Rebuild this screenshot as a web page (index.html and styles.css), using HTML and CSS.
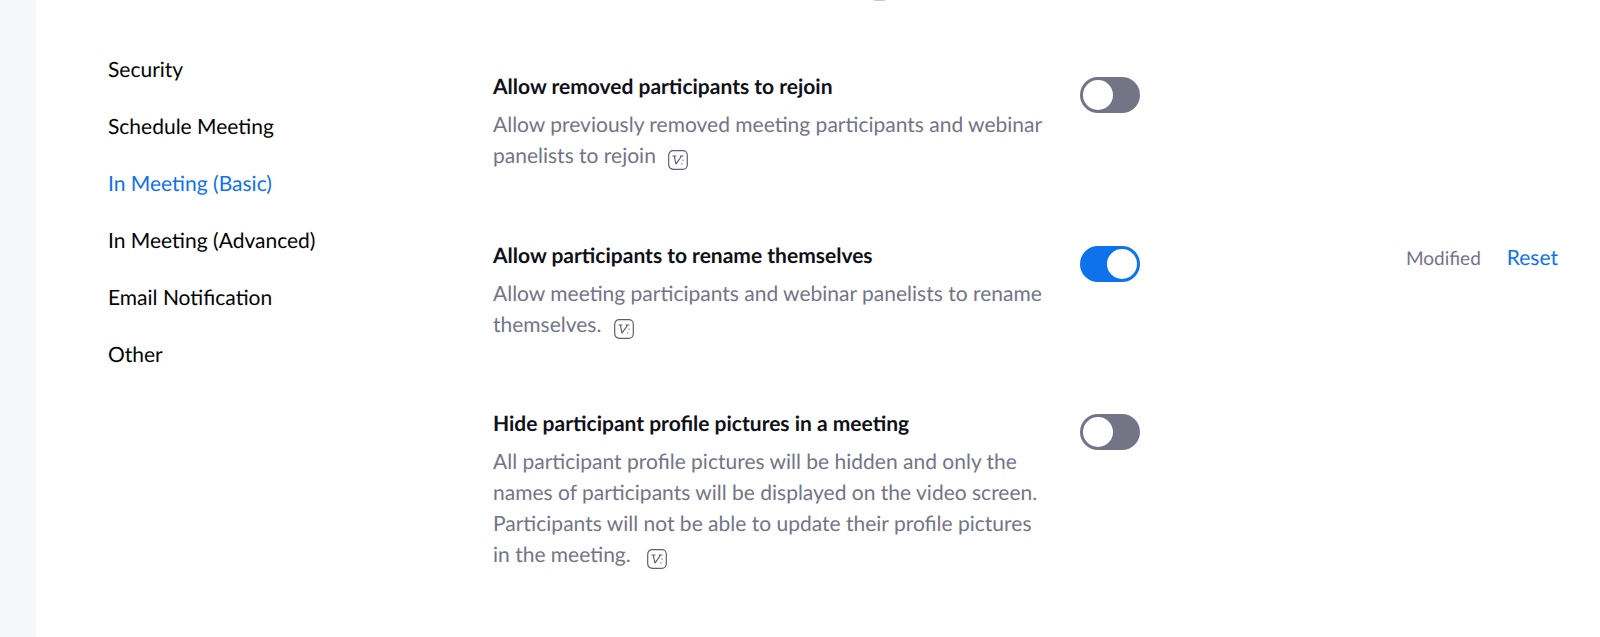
FILE: index.html
```html
<!DOCTYPE html>
<html>
  <head>
    <meta charset="utf-8" />
    <title>Meeting settings</title>
    <link rel="stylesheet" href="styles.css">
  </head>
  <body>
    <div class="gutter"></div>
    <div class="page">
      <span class="top-mark"></span>
      <ul class="side-nav">
        <li>Security</li>
        <li>Schedule Meeting</li>
        <li class="active">In Meeting (Basic)</li>
        <li>In Meeting (Advanced)</li>
        <li>Email Notification</li>
        <li>Other</li>
      </ul>
      <div class="settings">
        <div class="setting">
          <div class="setting-text">
            <h3>Allow removed participants to rejoin</h3>
            <p>
              Allow previously removed meeting participants and webinar
              panelists to rejoin
              <svg class="version-icon" viewBox="0 0 20 20"><rect x="0.7" y="0.7" width="18.6" height="18.6" rx="4.5" /><path d="M4.5 6h4M6.3 6l1.6 8.2M8 14.2L13.6 6M11.8 6h3.6M14.6 10.2h1M13.4 13.8h1" /></svg>
            </p>
          </div>
          <div class="toggle"></div>
          <div class="setting-state"></div>
        </div>
        <div class="setting">
          <div class="setting-text">
            <h3>Allow participants to rename themselves</h3>
            <p>
              Allow meeting participants and webinar panelists to rename
              themselves.
              <svg class="version-icon" viewBox="0 0 20 20"><rect x="0.7" y="0.7" width="18.6" height="18.6" rx="4.5" /><path d="M4.5 6h4M6.3 6l1.6 8.2M8 14.2L13.6 6M11.8 6h3.6M14.6 10.2h1M13.4 13.8h1" /></svg>
            </p>
          </div>
          <div class="toggle on"></div>
          <div class="setting-state">
            <span class="modified">Modified</span>
            <a class="reset">Reset</a>
          </div>
        </div>
        <div class="setting">
          <div class="setting-text">
            <h3>Hide participant profile pictures in a meeting</h3>
            <p>
              All participant profile pictures will be hidden and only the
              names of participants will be displayed on the video screen.
              Participants will not be able to update their profile pictures
              in the meeting.
              <svg class="version-icon wide-gap" viewBox="0 0 20 20"><rect x="0.7" y="0.7" width="18.6" height="18.6" rx="4.5" /><path d="M4.5 6h4M6.3 6l1.6 8.2M8 14.2L13.6 6M11.8 6h3.6M14.6 10.2h1M13.4 13.8h1" /></svg>
            </p>
          </div>
          <div class="toggle"></div>
          <div class="setting-state"></div>
        </div>
      </div>
    </div>
  </body>
</html>
```

FILE: styles.css
```css
html,
body {
  margin: 0;
  height: 100%;
  overflow: hidden;
}
body {
  display: flex;
  background: #fff;
  font-family: "Lato", sans-serif;
  color: #040404;
  text-rendering: geometricPrecision;
}
.gutter {
  width: 36px;
  background: #f6f7f9;
}
.page {
  flex: 1;
  display: flex;
  position: relative;
}
.top-mark {
  position: absolute;
  left: 838px;
  top: 0;
  width: 11px;
  height: 1px;
  background: #c9c7d3;
}
.side-nav {
  list-style: none;
  margin: 0;
  padding: 55px 0 0 72px;
  width: 385px;
  font-size: 21px;
}
.side-nav li {
  height: 57px;
  line-height: 30px;
}
.side-nav .active {
  color: #0e72ed;
}
.settings {
  flex: 1;
  padding-top: 72px;
}
.setting {
  display: flex;
  height: 168.5px;
}
.setting-text {
  width: 555px;
  margin-right: 32px;
}
.setting-text h3 {
  margin: 0;
  font-size: 21px;
  font-weight: 700;
  line-height: 30px;
  color: #10101a;
}
.setting-text p {
  margin: 7px 0 0;
  font-size: 21px;
  line-height: 31px;
  color: #747487;
}
.version-icon {
  width: 20px;
  height: 20px;
  margin-left: 7px;
  vertical-align: -7px;
  fill: none;
  stroke: #5f5f70;
  stroke-width: 1.2;
}
.wide-gap {
  margin-left: 11px;
}
.toggle {
  position: relative;
  width: 60px;
  height: 36px;
  margin-top: 5px;
  border-radius: 18px;
  background: #747487;
}
.toggle::after {
  content: "";
  position: absolute;
  left: 3px;
  top: 3px;
  width: 30px;
  height: 30px;
  border-radius: 50%;
  background: #fff;
}
.toggle.on {
  background: #0e72ed;
}
.toggle.on::after {
  left: 27px;
}
.setting-state {
  flex: 1;
  display: flex;
  justify-content: flex-end;
  align-items: baseline;
  gap: 26px;
  margin-right: 42px;
  padding-top: 2px;
  font-size: 21px;
  line-height: 30px;
}
.modified {
  color: #747487;
  font-size: 19px;
}
.reset {
  color: #0e72ed;
}
```
